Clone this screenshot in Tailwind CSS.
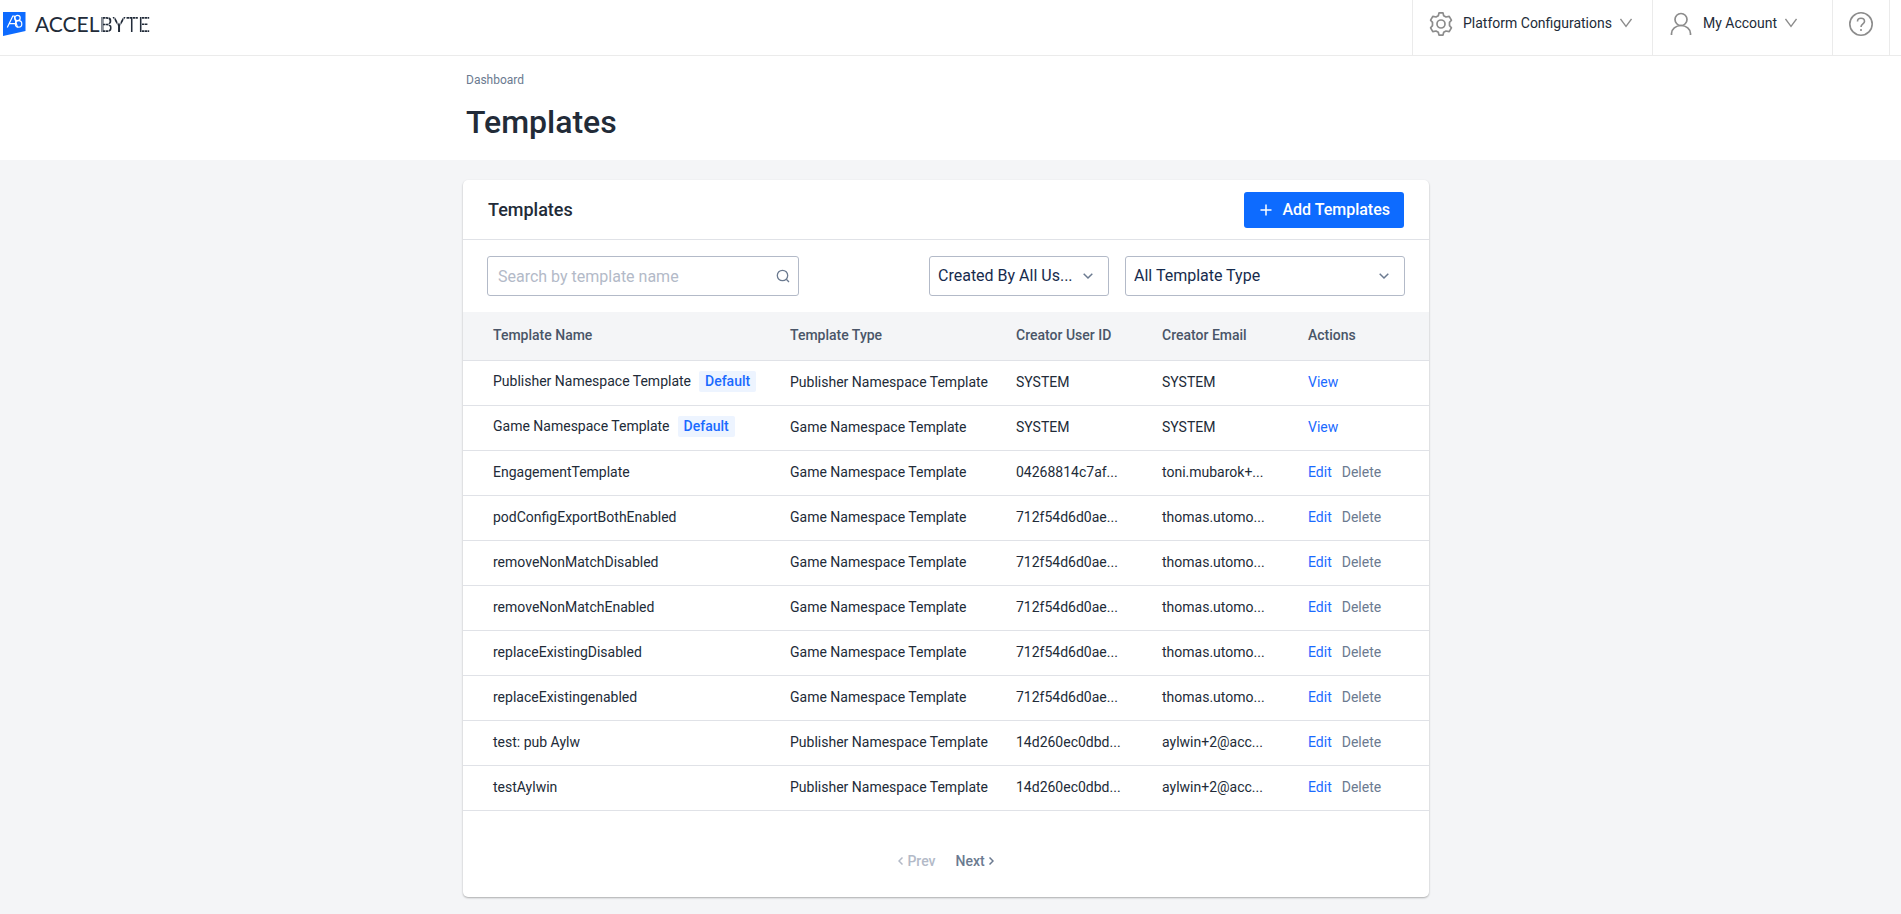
<!DOCTYPE html>
<html lang="en">
<head>
<meta charset="utf-8">
<meta name="viewport" content="width=device-width, initial-scale=1">
<title>Templates</title>
<script src="https://cdn.jsdelivr.net/npm/@tailwindcss/browser@4"></script>
</head>
<body class="min-h-screen bg-[#f4f5f7] font-['Roboto',sans-serif] text-sm text-[#222b38]">

<header class="flex h-14 justify-between border-b border-[#ebebeb] bg-white pr-[11px]">
  <a href="#" aria-label="AccelByte" class="flex h-12 items-center gap-2 pl-[3px]">
    <svg class="h-6 w-6" viewBox="0 0 24 24" aria-hidden="true">
      <path d="M0 0H22.500V19L0 24Z" fill="#0d6bff"/>
      <g fill="none" stroke="#fff" stroke-width="1.200">
        <path d="M4.300 15.500 9.800 4h1.400l3.300 11.500M6.300 11.700h7"/>
        <circle cx="14.500" cy="6" r="2.700"/>
        <circle cx="15.600" cy="11.900" r="3.200"/>
      </g>
    </svg>
    <span class="font-['Lato',sans-serif] text-[21px] leading-6">ACCEL<span class="bg-[repeating-linear-gradient(90deg,#222b38_0_2px,#8b929c_2px_3px)] bg-clip-text text-transparent">BYTE</span></span>
  </a>
  <nav class="flex">
    <button type="button" class="flex w-60 items-start border-l border-[#ebebeb] pt-3 pl-4">
      <svg class="h-6 w-6" viewBox="0 0 24 24" fill="none" stroke="#8c8c8c" stroke-width="1.700" stroke-linejoin="round" aria-hidden="true">
        <path d="M10 .9h4l.7 2.800 2.300 1.300 3.200-.7 2.200 3.900-1.900 2.200v3.200l1.900 2.200-2.200 3.900-3.200-.7-2.300 1.300-.7 2.800h-4l-.7-2.800L7 19l-3.200.7-2.200-3.900 1.900-2.200v-3.200L1.600 8.200l2.200-3.900L7 5l2.300-1.300z"/>
        <circle cx="12" cy="12" r="4"/>
      </svg>
      <span class="ml-2.5 leading-[22px]">Platform Configurations</span>
      <svg class="mt-1.5 ml-2 h-3 w-3" viewBox="0 0 12 12" fill="none" stroke="#8c8c8c" stroke-width="1.300" aria-hidden="true"><path d="M.5 1 6 8.500 11.500 1"/></svg>
    </button>
    <button type="button" class="flex w-45 items-start border-l border-[#ebebeb] pt-3 pl-4">
      <svg class="h-6 w-6" viewBox="0 0 24 24" fill="none" stroke="#8c8c8c" stroke-width="1.700" aria-hidden="true"><circle cx="12" cy="7.500" r="6"/><path d="M2.500 23v-1.500a9.500 8 0 0 1 19 0V23"/></svg>
      <span class="ml-2.5 leading-[22px]">My Account</span>
      <svg class="mt-1.5 ml-2 h-3 w-3" viewBox="0 0 12 12" fill="none" stroke="#8c8c8c" stroke-width="1.300" aria-hidden="true"><path d="M.5 1 6 8.500 11.500 1"/></svg>
    </button>
    <button type="button" aria-label="Help" class="flex w-[58px] items-start justify-center border-x border-[#ebebeb] pt-3">
      <svg class="h-6 w-6" viewBox="0 0 24 24" fill="none" stroke="#8c8c8c" stroke-width="1.600" aria-hidden="true"><circle cx="12" cy="12" r="11.200"/><path d="M8.500 9.500C8.500 5.200 15.500 5.200 15.500 9.500c0 2.500-3.500 2.300-3.500 5.500"/><path d="M12 17v2"/></svg>
    </button>
  </nav>
</header>

<div class="bg-white pr-[9px]">
  <div class="mx-auto h-[104px] max-w-[966px] px-[3px] pt-4">
    <nav aria-label="Breadcrumb"><a href="#" class="block text-xs leading-4 text-[#6b7a90]">Dashboard</a></nav>
    <h1 class="mt-3.5 text-[32px] leading-10 font-medium">Templates</h1>
  </div>
</div>

<main class="pt-5 pr-[9px] pb-4">
  <section class="mx-auto max-w-[966px] rounded-[5px] bg-white shadow-[0_1px_2px_rgba(0,0,0,0.3)]">
    <div class="flex h-15 items-center justify-between border-b border-[#e0e2e7] px-[25px]">
      <h2 class="text-lg leading-6 font-medium">Templates</h2>
      <button type="button" class="flex h-9 items-center gap-2.5 rounded-[3px] bg-[#0d6bff] pr-3.5 pl-4 text-base font-medium text-white">
        <svg class="h-3 w-3" viewBox="0 0 12 12" stroke="#fff" stroke-width="1.500" aria-hidden="true"><path d="M6 .5v11M.5 6h11"/></svg>
        Add Templates
      </button>
    </div>

    <form class="flex h-18 items-center px-6">
      <div class="relative w-[312px]">
        <input type="search" aria-label="Search by template name" placeholder="Search by template name" class="h-10 w-full rounded-[3px] border border-[#b3bac8] pr-8 pl-2.5 text-base placeholder:text-[#b3bac8]">
        <svg class="absolute top-[13px] right-[9px] h-3.5 w-3.5" viewBox="0 0 14 14" fill="none" stroke="#6b7a90" stroke-width="1.300" aria-hidden="true"><circle cx="6.500" cy="6.500" r="5.200"/><path d="m10.300 10.300 2.700 2.700"/></svg>
      </div>
      <div class="relative ml-auto w-[180px]">
        <select aria-label="Created by" class="h-10 w-full appearance-none truncate rounded-[3px] border border-[#b3bac8] pr-6 pl-2 text-base text-[#172b4d]"><option>Created By All Us...</option></select>
        <svg class="pointer-events-none absolute top-4 right-4 h-2 w-2.5" viewBox="0 0 10 8" fill="none" stroke="#6b7a90" stroke-width="1.500" aria-hidden="true"><path d="m.7 1.700 4.300 4.300 4.300-4.300"/></svg>
      </div>
      <div class="relative ml-4 w-[280px]">
        <select aria-label="Template type" class="h-10 w-full appearance-none truncate rounded-[3px] border border-[#b3bac8] pr-8 pl-2 text-base text-[#172b4d]"><option>All Template Type</option></select>
        <svg class="pointer-events-none absolute top-4 right-4 h-2 w-2.5" viewBox="0 0 10 8" fill="none" stroke="#6b7a90" stroke-width="1.500" aria-hidden="true"><path d="m.7 1.700 4.300 4.300 4.300-4.300"/></svg>
      </div>
    </form>

    <table class="w-full table-fixed text-left whitespace-nowrap [&_td]:pb-0.5 [&_td]:pl-[30px] [&_th]:pb-0.5 [&_th]:pl-[30px] [&_th]:font-medium [&_tr]:border-b [&_tr]:border-[#e0e2e7]">
      <colgroup><col class="w-[297px]"><col class="w-[226px]"><col class="w-[146px]"><col class="w-[146px]"><col></colgroup>
      <thead><tr class="h-12 bg-[#f4f5f7] text-[#4a5568]"><th>Template Name</th><th>Template Type</th><th>Creator User ID</th><th>Creator Email</th><th>Actions</th></tr></thead>
      <tbody class="[&_a]:text-[#1a6aff] [&_button]:ml-2.5 [&_button]:text-[#6b7a90] [&_mark]:ml-2 [&_mark]:inline-block [&_mark]:rounded-xs [&_mark]:bg-[#edf4ff] [&_mark]:px-1.5 [&_mark]:leading-[21px] [&_mark]:font-medium [&_mark]:text-[#1a6aff] [&_tr]:h-[45px]">
        <tr><td>Publisher Namespace Template<mark>Default</mark></td><td>Publisher Namespace Template</td><td>SYSTEM</td><td>SYSTEM</td><td><a href="#">View</a></td></tr>
        <tr><td>Game Namespace Template<mark>Default</mark></td><td>Game Namespace Template</td><td>SYSTEM</td><td>SYSTEM</td><td><a href="#">View</a></td></tr>
        <tr><td>EngagementTemplate</td><td>Game Namespace Template</td><td>04268814c7af...</td><td>toni.mubarok+...</td><td><a href="#">Edit</a><button type="button">Delete</button></td></tr>
        <tr><td>podConfigExportBothEnabled</td><td>Game Namespace Template</td><td>712f54d6d0ae...</td><td>thomas.utomo...</td><td><a href="#">Edit</a><button type="button">Delete</button></td></tr>
        <tr><td>removeNonMatchDisabled</td><td>Game Namespace Template</td><td>712f54d6d0ae...</td><td>thomas.utomo...</td><td><a href="#">Edit</a><button type="button">Delete</button></td></tr>
        <tr><td>removeNonMatchEnabled</td><td>Game Namespace Template</td><td>712f54d6d0ae...</td><td>thomas.utomo...</td><td><a href="#">Edit</a><button type="button">Delete</button></td></tr>
        <tr><td>replaceExistingDisabled</td><td>Game Namespace Template</td><td>712f54d6d0ae...</td><td>thomas.utomo...</td><td><a href="#">Edit</a><button type="button">Delete</button></td></tr>
        <tr><td>replaceExistingenabled</td><td>Game Namespace Template</td><td>712f54d6d0ae...</td><td>thomas.utomo...</td><td><a href="#">Edit</a><button type="button">Delete</button></td></tr>
        <tr><td>test: pub Aylw</td><td>Publisher Namespace Template</td><td>14d260ec0dbd...</td><td>aylwin+2@acc...</td><td><a href="#">Edit</a><button type="button">Delete</button></td></tr>
        <tr><td>testAylwin</td><td>Publisher Namespace Template</td><td>14d260ec0dbd...</td><td>aylwin+2@acc...</td><td><a href="#">Edit</a><button type="button">Delete</button></td></tr>
      </tbody>
    </table>

    <nav aria-label="Pagination" class="flex items-center justify-center gap-5 pt-10 pb-[26px] font-medium">
      <button type="button" disabled class="flex items-center gap-1 text-[#b3bac8]">
        <svg class="h-2 w-[5px]" viewBox="0 0 5 8" fill="none" stroke="currentColor" stroke-width="1.500" aria-hidden="true"><path d="M4.500.5 1 4l3.500 3.500"/></svg>Prev
      </button>
      <button type="button" class="flex items-center gap-1 text-[#6b7a90]">Next
        <svg class="h-2 w-[5px]" viewBox="0 0 5 8" fill="none" stroke="currentColor" stroke-width="1.500" aria-hidden="true"><path d="M.5.5 4 4 .5 7.500"/></svg>
      </button>
    </nav>
  </section>
</main>
</body>
</html>
